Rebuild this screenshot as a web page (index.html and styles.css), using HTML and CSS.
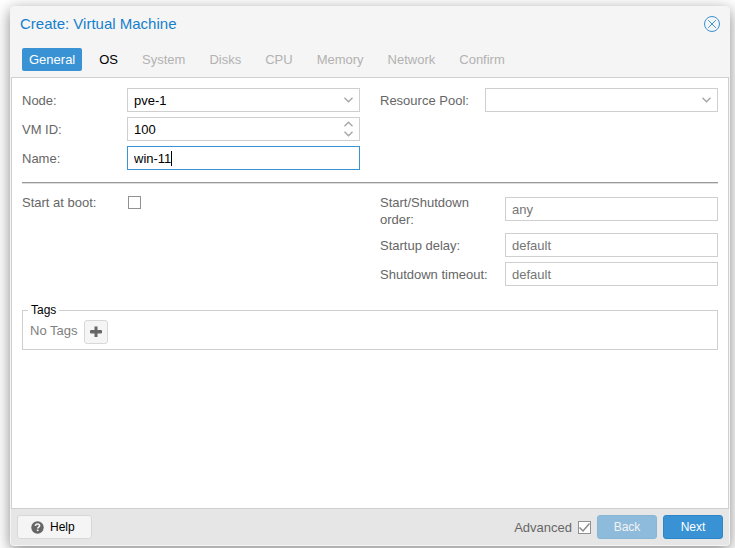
FILE: index.html
```html
<!DOCTYPE html>
<html lang="en">
<head>
  <meta charset="UTF-8" />
  <meta name="viewport" content="width=device-width, initial-scale=1.0"/>
  <title>Create: Virtual Machine</title>
  <link rel="stylesheet" href="styles.css">
</head>
<body>

<form class="window">
  <header class="window-header">
    <h1>Create: Virtual Machine</h1>
    <button type="button" class="close-btn" aria-label="Close">
      <svg width="16" height="16" viewBox="0 0 16 16" fill="none" stroke="currentColor">
        <circle cx="8" cy="8" r="7.5"/>
        <path d="M4.2 4.2l7.6 7.6M11.8 4.2l-7.6 7.6"/>
      </svg>
    </button>
  </header>

  <nav class="tabs">
    <button type="button" class="tab active">General</button>
    <button type="button" class="tab">OS</button>
    <button type="button" class="tab" disabled>System</button>
    <button type="button" class="tab" disabled>Disks</button>
    <button type="button" class="tab" disabled>CPU</button>
    <button type="button" class="tab" disabled>Memory</button>
    <button type="button" class="tab" disabled>Network</button>
    <button type="button" class="tab" disabled>Confirm</button>
  </nav>

  <main class="panel">
    <div class="columns">
      <div class="column">
        <div class="field">
          <label for="node">Node:</label>
          <div class="control">
            <select id="node"><option>pve-1</option></select>
            <svg class="arrow" width="9" height="6" viewBox="0 0 9 6"><path d="M.5 .7l4 4 4-4"/></svg>
          </div>
        </div>
        <div class="field">
          <label for="vmid">VM ID:</label>
          <div class="control">
            <input type="number" id="vmid" value="100">
            <div class="spinner">
              <button type="button" aria-label="Increase"><svg width="9" height="6" viewBox="0 0 9 6"><path d="M.5 5.3l4-4 4 4"/></svg></button>
              <button type="button" aria-label="Decrease"><svg width="9" height="6" viewBox="0 0 9 6"><path d="M.5 .7l4 4 4-4"/></svg></button>
            </div>
          </div>
        </div>
        <div class="field">
          <label for="name">Name:</label>
          <div class="control">
            <input type="text" id="name" value="win-11">
            <span class="caret"></span>
          </div>
        </div>
      </div>

      <div class="column">
        <div class="field">
          <label for="pool">Resource Pool:</label>
          <div class="control">
            <select id="pool"><option></option></select>
            <svg class="arrow" width="9" height="6" viewBox="0 0 9 6"><path d="M.5 .7l4 4 4-4"/></svg>
          </div>
        </div>
      </div>
    </div>

    <hr>

    <!-- Advanced options -->
    <div class="columns">
      <div class="column">
        <div class="field">
          <label for="onboot">Start at boot:</label>
          <div class="check-cell">
            <input type="checkbox" id="onboot" class="checkbox">
          </div>
        </div>
      </div>

      <div class="column wide-labels">
        <div class="field">
          <label for="order">Start/Shutdown order:</label>
          <div class="control"><input type="text" id="order" placeholder="any"></div>
        </div>
        <div class="field">
          <label for="up">Startup delay:</label>
          <div class="control"><input type="text" id="up" placeholder="default"></div>
        </div>
        <div class="field">
          <label for="down">Shutdown timeout:</label>
          <div class="control"><input type="text" id="down" placeholder="default"></div>
        </div>
      </div>
    </div>

    <fieldset class="tags">
      <legend>Tags</legend>
      <div class="tags-row">
        <span>No Tags</span>
        <button type="button" class="add-btn" aria-label="Add tag">
          <svg width="12" height="12" viewBox="0 0 12 12"><path d="M4.5 0.500h3v3.500H11a1 1 0 0 1 1 1v1.500a1 1 0 0 1-1 1H7.500V11h-3V7.500H1a1 1 0 0 1-1-1V5a1 1 0 0 1 1-1h3.500z"/></svg>
        </button>
      </div>
    </fieldset>
  </main>

  <footer class="toolbar">
    <button type="button" class="btn help-btn">
      <svg width="13" height="13" viewBox="0 0 13 13">
        <circle cx="6.500" cy="6.500" r="6.200" fill="#666"/>
        <path d="M4.400 4.900c.1-1.300 1-1.900 2.100-1.900 1.200 0 2.100.7 2.100 1.700 0 1.500-1.900 1.400-1.900 2.900" fill="none" stroke="#f5f5f5" stroke-width="1.600"/>
        <path d="M5.800 8.500h1.700v1.600H5.800z" fill="#f5f5f5"/>
      </svg>
      Help
    </button>
    <label for="advanced">Advanced</label>
    <input type="checkbox" id="advanced" class="checkbox" checked>
    <button type="button" class="btn primary" disabled>Back</button>
    <button type="button" class="btn primary">Next</button>
  </footer>
</form>

<script>
  document.getElementById('name').focus();
</script>

</body>
</html>
```

FILE: styles.css
```css
:root {
  --blue: #3892d4;
  --title: #157fcc;
  --border: #cfcfcf;
  --label: #666;
  --light: #f5f5f5;
  --font-family: "Liberation Sans", Arial, Helvetica, sans-serif;
}

* {
  box-sizing: border-box;
  margin: 0;
  padding: 0;
  font-family: var(--font-family);
}

body {
  background: #fff;
  color: var(--label);
  font-size: 13px;
  line-height: 17px;
  min-height: 100vh;
  padding: 6px 5px 2px 10px;
  display: flex;
}

button,
input,
select {
  font-size: 13px;
}

button {
  border: none;
  background: none;
  cursor: pointer;
}

.window {
  flex: 1;
  display: flex;
  flex-direction: column;
  background: var(--light);
  border: 1px solid var(--light);
  border-radius: 4px;
  box-shadow: 0 4px 15px #888;
}

.window-header {
  display: flex;
  justify-content: space-between;
  align-items: center;
  padding: 8px 9px;
}

h1 {
  color: var(--title);
  font-size: 15px;
  font-weight: normal;
  line-height: 18px;
}

.close-btn {
  color: var(--blue);
  display: flex;
}

/* Wizard tabs */
.tabs {
  display: flex;
  gap: 10px;
  padding: 7px 11px 6px;
}

.tab {
  height: 23px;
  padding: 0 7px;
  border-radius: 2px;
  color: #000;
}

.tab.active {
  background: var(--blue);
  color: #fff;
}

.tab:disabled {
  color: #b2b2b2;
}

.panel {
  flex: 1;
  background: #fff;
  border: 1px solid var(--border);
  padding: 10px;
}

.columns {
  display: grid;
  grid-template-columns: 1fr 1fr;
  gap: 20px;
}

.column {
  display: flex;
  flex-direction: column;
  gap: 5px;
}

/* Form fields */
.field {
  display: grid;
  grid-template-columns: 105px 1fr;
  align-items: center;
}

.wide-labels .field {
  grid-template-columns: 125px 1fr;
}

.field label {
  padding: 4px 5px 0 0;
  align-self: start;
}

.control {
  position: relative;
}

.control input,
.control select {
  display: block;
  width: 100%;
  height: 24px;
  padding: 0 6px;
  border: 1px solid var(--border);
  border-radius: 0;
  background: #fff;
  color: #000;
  appearance: none;
  outline: none;
}

.control input:focus {
  border-color: var(--blue);
  caret-color: transparent;
}

.control input::placeholder {
  color: #757575;
}

/* Text cursor, shown at the end of the focused name */
.caret {
  display: none;
  position: absolute;
  left: 44px;
  top: 5px;
  width: 1px;
  height: 15px;
  background: #000;
}

input:focus + .caret {
  display: block;
}

input[type="number"] {
  -moz-appearance: textfield;
}

input[type="number"]::-webkit-inner-spin-button {
  display: none;
}

.control svg {
  fill: none;
  stroke: #a6a6a6;
  stroke-width: 1.4;
  display: block;
}

.arrow {
  position: absolute;
  right: 7px;
  top: 9px;
  pointer-events: none;
}

.spinner {
  position: absolute;
  right: 7px;
  top: 4px;
  display: flex;
  flex-direction: column;
  gap: 4px;
}

.spinner button {
  display: block;
}

hr {
  border: none;
  border-top: 1px solid #999;
  border-bottom: 1px solid #ddd;
  margin: 12px 0 6px;
}

.checkbox {
  appearance: none;
  width: 13px;
  height: 13px;
  border: 1px solid #919191;
  background: #fff;
}

.check-cell {
  display: flex;
  align-items: center;
  height: 24px;
  padding-left: 1px;
}

.checkbox:checked {
  background: #fff url("data:image/svg+xml,%3Csvg xmlns='http://www.w3.org/2000/svg' viewBox='0 0 11 11'%3E%3Cpath d='M.5 5.500l3.500 3.500 6.500-7.500' fill='none' stroke='%23888' stroke-width='1.500'/%3E%3C/svg%3E");
}

/* Tags */
.tags {
  border: 1px solid var(--border);
  margin-top: 17px;
  padding: 2px 5px 5px;
}

.tags legend {
  color: #000;
  font-size: 12px;
  line-height: 15px;
  padding: 0 3px;
}

.tags-row {
  display: flex;
  gap: 7px;
  padding-left: 2px;
  color: #808080;
}

.tags-row span {
  padding-top: 2px;
}

.add-btn {
  display: flex;
  align-items: center;
  justify-content: center;
  width: 24px;
  height: 24px;
  background: var(--light);
  border: 1px solid #d8d8d8;
  border-radius: 3px;
}

.add-btn svg {
  fill: #666;
}

/* Bottom toolbar */
.toolbar {
  display: flex;
  align-items: center;
  gap: 6px;
  padding: 6px;
  background: #e6e6e6;
  border-radius: 0 0 3px 3px;
}

.btn {
  height: 24px;
  min-width: 60px;
  border: 1px solid #d8d8d8;
  border-radius: 3px;
  font-size: 12px;
}

.help-btn {
  display: flex;
  align-items: center;
  gap: 6px;
  min-width: 75px;
  padding: 0 13px;
  margin-right: auto;
  background: var(--light);
  color: #000;
}

.btn.primary {
  background: var(--blue);
  border-color: #2e86c8;
  color: #fff;
}

.btn.primary:disabled {
  opacity: 0.5;
}
```
